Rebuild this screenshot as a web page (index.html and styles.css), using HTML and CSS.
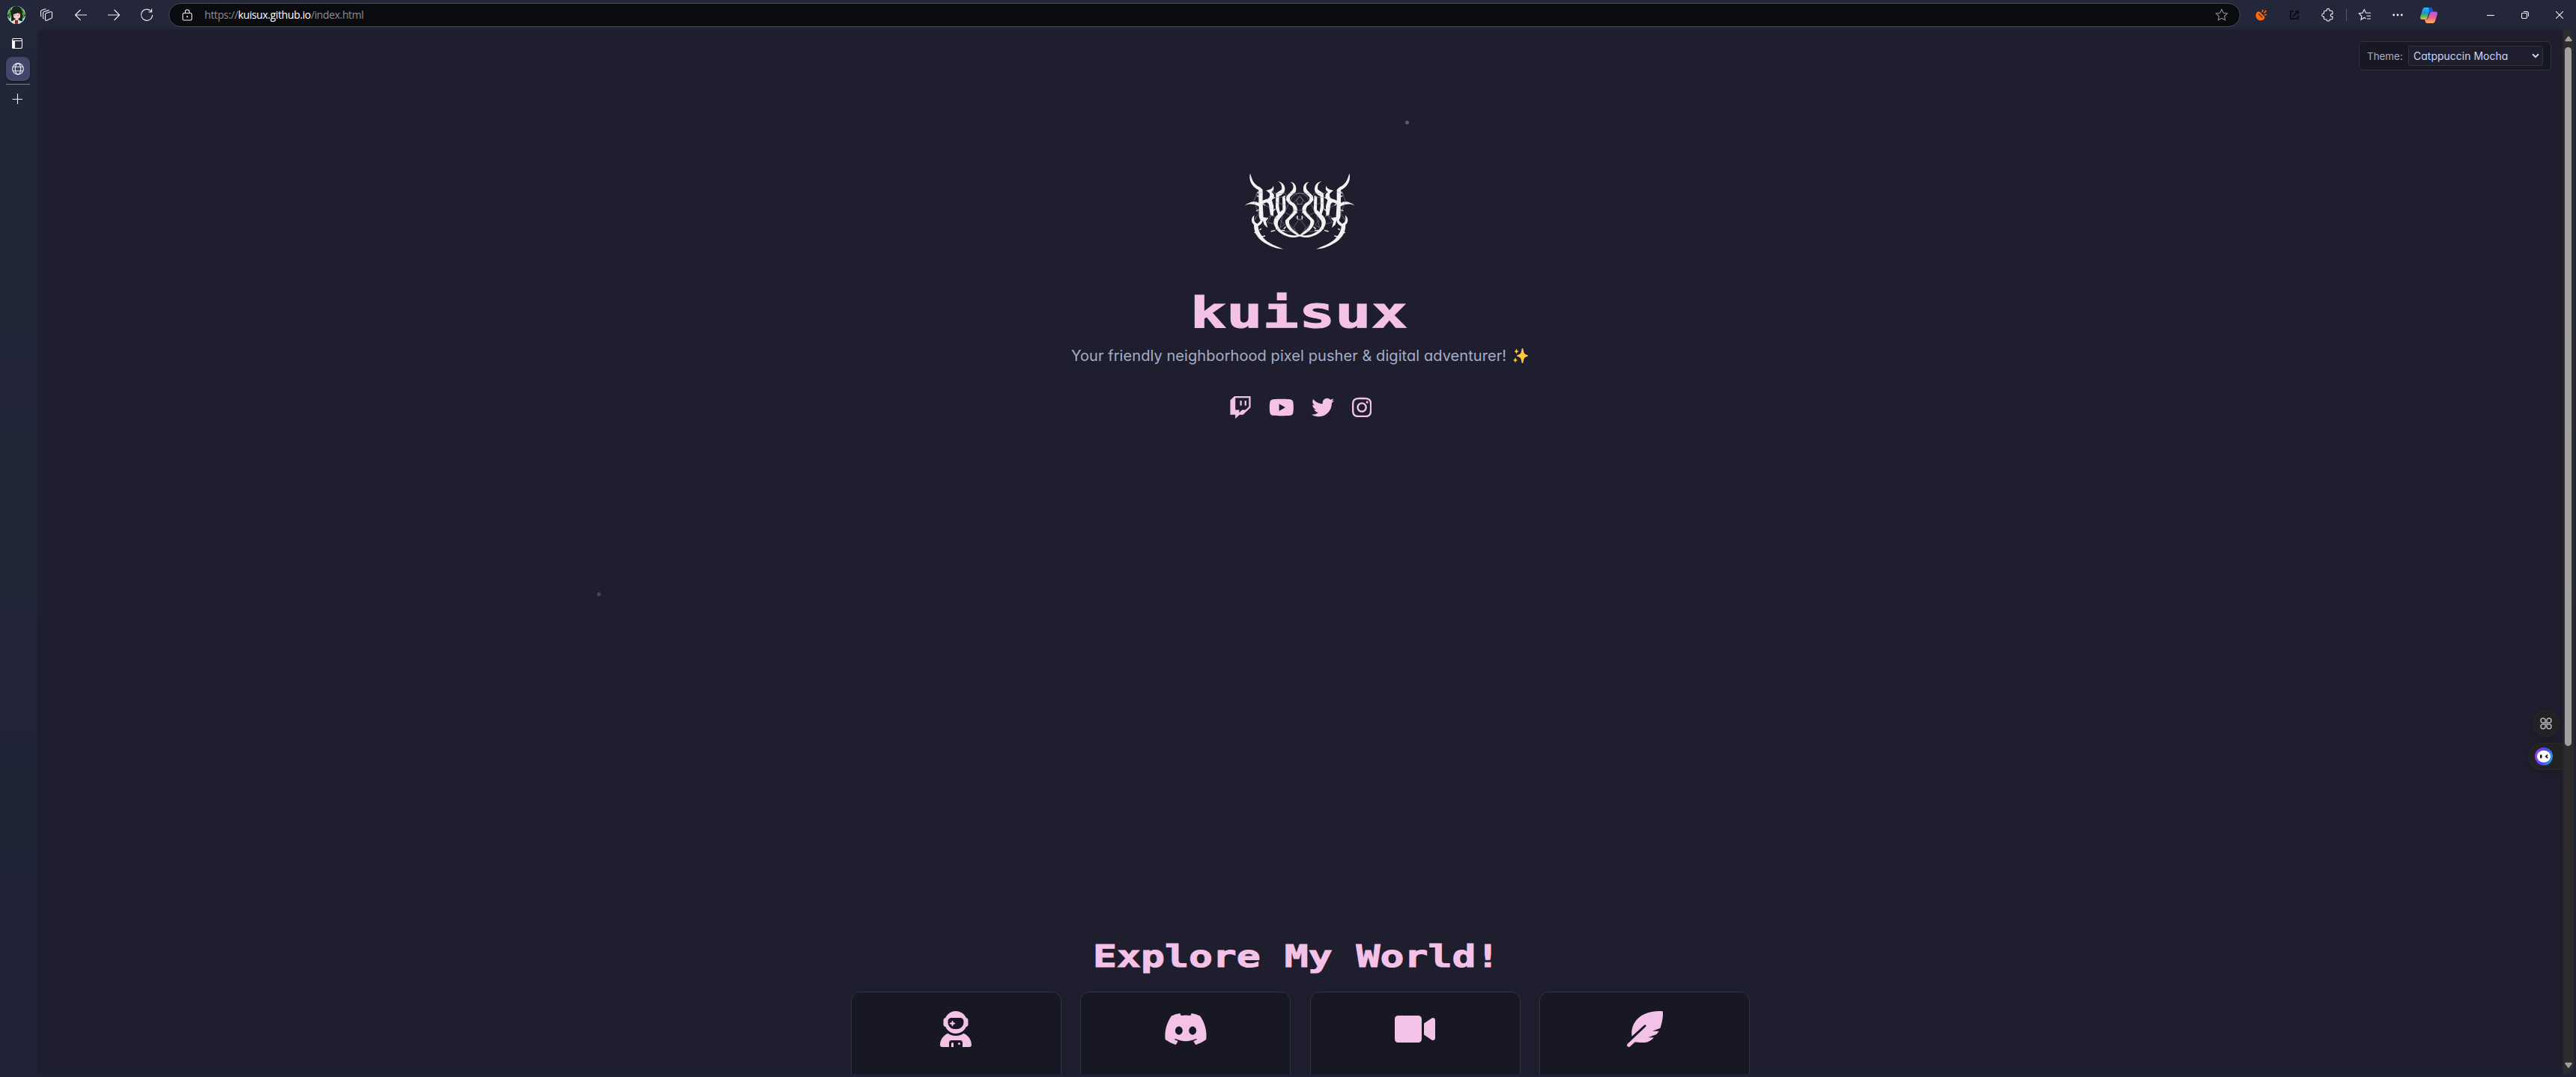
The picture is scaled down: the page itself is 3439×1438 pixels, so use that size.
FILE: index.html
```html
<!DOCTYPE html>
<html lang="en">
<head>
<meta charset="utf-8">
<title>kuisux</title>
<link rel="stylesheet" href="styles.css">
</head>
<body>
<div class="browser">
  <header class="toolbar">
    <div class="nav">
      <svg class="avatar" width="24" height="24" viewBox="0 0 24 24">
        <defs><clipPath id="round"><circle cx="12" cy="12" r="12"/></clipPath></defs>
        <g clip-path="url(#round)">
          <rect width="24" height="24" fill="#a9dcd5"/>
          <path d="M5 20V9C5 2 8 0 12 0s8 3 8 9v11z" fill="#1b2520"/>
          <path d="M4 3 0 13l3 4 3-10zM19 2l5 10-3 5-3-9z" fill="#182016"/>
          <path d="M5 3 1 11M4 8 2 15M19 4l4 8M20 9l2 6" stroke="#5fba30" stroke-width="1.3"/>
          <path d="M8 9h9v6l-4.500 4L8 15z" fill="#f0cfc4"/>
          <path d="M8 11V7l3 2 2-3 4 4-1 1-2-2-2 1z" fill="#1a1c1d"/>
          <path d="M5 24c1-5 4-6 7-6s6 1 7 6z" fill="#dedbd9"/>
          <path d="M10 19h4v5h-4z" fill="#8d2727"/>
          <path d="M9 12.500h1.500m3 0H15" stroke="#b2575a"/>
        </g>
      </svg>
      <svg class="i-spaces" width="18" height="18" viewBox="0 0 18 18"><path d="M9 6.500 14.500 4.800Q16.500 4.300 16.500 6v6q0 1.200-1.200 1.600L9.500 16.200Q7.500 17 7.500 15V8.300Q7.500 7 9 6.500zM5.800 13.800Q4.500 14 4.500 12.500V6.300Q4.500 5 6 4.500L12.500 2.600M2.500 11Q1.500 11 1.500 9.800V4.300Q1.500 3 3 2.500L8.500.8"/></svg>
      <svg class="i-back" width="18" height="18" viewBox="0 0 18 18"><path d="M17 9H1.500M8.500 2 1.500 9l7 7"/></svg>
      <svg class="i-fwd" width="18" height="18" viewBox="0 0 18 18"><path d="M1 9h15.500M9.500 2l7 7-7 7"/></svg>
      <svg class="i-reload" width="18" height="18" viewBox="0 0 18 18"><path d="M16.500 9A7.500 7.500 0 1 1 14 3.300L15.500 5M15.500.8V5h-4.200"/></svg>
    </div>
    <div class="address">
      <svg width="14" height="16" viewBox="0 0 14 16"><rect x="1" y="5.500" width="12" height="9.500" rx="1.800"/><path d="M4.300 5.500V3.700a2.700 2.700 0 0 1 5.400 0v1.800"/><circle class="dot" cx="7" cy="10.300" r="1"/></svg>
      <div class="url">https://<b>kuisux.github.io</b>/index.html</div>
      <svg class="star" width="18" height="18" viewBox="0 0 18 18"><path d="M9 1.500l2.300 4.800 5.200.7-3.800 3.600.9 5.200L9 13.300l-4.600 2.500.9-5.200L1.500 7l5.200-.7z"/></svg>
    </div>
    <div class="tools">
      <svg class="t-orange" width="16" height="16" viewBox="0 0 16 16"><path class="orange" d="M2 4.500C3.500 3 5.500 3.500 7 5l5 5c1 1 .5 3-1 4-3 2-7 1.800-9-1C0 10.500 0 7 2 4.500z"/><path d="M4.500 6.500l5 5" stroke="#232838" stroke-width="1.100"/><path class="ray" d="M9 4.500 10 1M11.500 5.500 14.500 2M12 8l3-.8"/></svg>
      <svg class="t-open" width="14" height="14" viewBox="0 0 14 14"><path d="M6 2H2v10h10V8M8 2h4v4M12 2 5 9"/></svg>
      <svg class="t-ext" width="18" height="18" viewBox="0 0 18 18"><path d="M3.500 5q0-1.500 1.500-1.500h2a2.200 2.200 0 1 1 4.200 0h2.300q1.500 0 1.500 1.500v2.600h-.8a1.900 1.900 0 0 0 0 3.800h.8v2.200q0 1.400-1.500 1.400h-2.200a2.200 2.200 0 0 1-4.400 0H5q-1.500 0-1.500-1.500v-2.200a2.200 2.200 0 1 1 0-4.300z"/></svg>
      <i class="divider"></i>
      <svg class="t-fav" width="18" height="18" viewBox="0 0 18 18"><path d="M10.500 13.800 8.300 12.500 4 15.300 4.800 10.500 1.300 7 6 6.300 8.300 1.800 10.600 6.300H17M11.500 10.200H17M12 14h5"/></svg>
      <svg class="t-more" width="14" height="4" viewBox="0 0 14 4"><circle cx="1.700" cy="2" r="1.400"/><circle cx="7" cy="2" r="1.400"/><circle cx="12.300" cy="2" r="1.400"/></svg>
      <svg class="t-copilot" width="23" height="21" viewBox="0 0 23 21">
        <defs>
          <linearGradient id="ga" x1="0" y1="0" x2="0" y2="1"><stop offset="0" stop-color="#1cb9ff"/><stop offset=".45" stop-color="#1b8fd2"/><stop offset=".7" stop-color="#52b45b"/><stop offset="1" stop-color="#f0c514"/></linearGradient>
          <linearGradient id="gb" x1="0" y1="0" x2="0" y2="1"><stop offset="0" stop-color="#aa5bf0"/><stop offset=".5" stop-color="#ee5b91"/><stop offset="1" stop-color="#ffb352"/></linearGradient>
        </defs>
        <path d="M6 0h7.500q2 0 2.600 2l.9 3.500h-3q-2 0-2.500 2L9.500 14q-.6 2-2.500 2H2.500Q-.5 16 .2 12.500L3 3Q4 0 6 0z" fill="url(#ga)"/>
        <path d="M17 21H9.500q-2 0-2.600-2L6 15.800h2q2 0 2.500-2L13 7q.6-1.500 2.500-1.500h5q3 0 2.300 3.500L20 18q-1 3-3 3z" fill="url(#gb)"/>
        <path d="M11.500 0h2q2 0 2.600 2l1 3.500h-3q-1.400 0-2 1z" fill="#1950d8"/>
      </svg>
      <svg class="w-min" width="10" height="10" viewBox="0 0 10 10"><path d="M0 5.500h10"/></svg>
      <svg class="w-max" width="10" height="10" viewBox="0 0 10 10"><rect x=".5" y="2.500" width="7" height="7" rx="1.500"/><path d="M3 .5h4q2.500 0 2.500 2.500v4"/></svg>
      <svg class="w-close" width="10" height="10" viewBox="0 0 10 10"><path d="M0 0l10 10M10 0 0 10"/></svg>
    </div>
  </header>
  <div class="body">
    <aside class="tabs">
      <svg class="panel" width="14" height="14" viewBox="0 0 14 14"><rect x=".5" y=".5" width="13" height="13" rx="2"/><path class="fill" d="M.5 3.500h3v10H2Q.5 13.500.5 12z"/><path d="M.5 3.500h13"/></svg>
      <div class="tab"><svg width="16" height="16" viewBox="0 0 16 16"><circle cx="8" cy="8" r="7.400"/><ellipse cx="8" cy="8" rx="3.700" ry="7.400"/><path d="M1.300 5.300h13.400M1.300 10.700h13.400"/></svg></div>
      <i class="line"></i>
      <svg class="plus" width="14" height="14" viewBox="0 0 14 14"><path d="M7.500 0v14M.5 7.500h14"/></svg>
    </aside>
    <main class="page">
      <svg class="logo" width="190" height="140" viewBox="0 0 570 420">
        <defs>
          <g id="half">
            <path d="M87 64C80 90 92 118 121 131L121 182C103 173 84 178 64 194 84 184 103 187 122 197L122 238 128 252 138 244 140 236 137 186 152 181C160 182 163 190 163 200L168 232 180 235 181 196 174 172C186 158 186 148 172 139 184 132 183 122 178 113 178 126 169 128 151 133L165 145C168 157 163 167 150 168L137 173 137 130 126 119C106 113 94 94 87 64z"/>
            <path d="M128 234C132 250 128 258 116 266 104 262 99 252 104 232 92 240 88 258 102 270 101 308 124 333 154 348 176 361 196 366 221 368 193 357 160 344 143 326 127 308 119 292 119 276 134 268 141 256 138 238z"/>
            <path d="M197 97C213 103 215 118 213 129L190 145 189 204 198 229C180 246 177 260 187 279 198 302 221 315 253 321 275 323 295 315 309 304 286 313 258 318 234 307 206 294 190 272 201 252L217 232C229 222 231 208 229 190L227 152 216 158 217 211 206 219 202 196 203 156C223 147 231 133 223 113 217 102 208 98 197 97z"/>
            <path d="M249 99C264 110 262 127 252 136L233 155C227 172 238 184 255 195 263 209 261 220 252 228L228 253C225 274 242 292 263 305L291 317 268 297C247 282 240 266 244 253L267 230C283 213 275 191 257 181 245 173 243 164 249 157L269 139C275 120 268 101 249 99z"/>
            <path d="M138 239 160 244 150 256 157 283 143 270 137 250z"/>
            <path class="spikes" d="M123 140l-9 3M122 158l-8-4M122 210l-11 5M137 185l9 8M124 291l8-5M133 318l14-3M151 343l14 2M186 160l-8 5M230 172l8-4M187 207l-8 8M199 280l-9 8M187 293l-17 4M230 278l-9 9M226 294l-14-2M266 215l10 8M276 234v15M112 305l-8-5"/>
            <path class="web" d="M118 135l-16 40 20 52M177 136l14 12 35-5 13 18M240 145h45M239 190l19-35 27-14M263 180l22-22M273 188h12M285 154l-13 17 5 16h8M239 190l-13 30 20 12 17-20h22M149 245l24-12 23 12M172 235l-17 25 30 8M205 250l20 20-30 19M217 233l-10 48M267 238l18 13M285 246l-25 35M245 268l40 44M225 297h28l15-13M110 150l26-12M140 189l31 15M189 180l40 12M188 160l40 0M122 225l-20 25M112 240l-8 14"/>
          </g>
        </defs>
        <use href="#half"/><use href="#half" transform="translate(571 0) scale(-1 1)"/>
      </svg>
      <h1>kuisux</h1>
      <p class="tagline"><span>Your friendly neighborhood pixel pusher &amp; digital adventurer!</span>
        <svg width="20" height="20" viewBox="0 0 20 20"><path d="M12.500 0q.8 0 1 1.200C14.300 6.500 15 7.800 18.800 9q1.200.4 1.200 1t-1.200 1c-3.800 1.200-4.500 2.500-5.300 7.800q-.2 1.200-1 1.200t-1-1.200C10.700 13.500 10 12.200 6.200 11 5 10.600 5 10.300 5 10s0-.6 1.200-1C10 7.800 10.700 6.500 11.500 1.200q.2-1.200 1-1.200zM4.500.500 5.500 3l2.200 1.200-2.200 1-1 2.500-1-2.500-2-1 2-1.200zM3 12l.9 2.800L6 16l-2.100 1L3 19.500 2.100 17 0 16l2.100-1.200z"/></svg>
      </p>
      <nav class="social">
        <svg width="30" height="30" viewBox="0 0 512 512"><path d="M391.170 103.470H352.540v109.700h38.630ZM285 103H246.370V212.750H285ZM120.830 0 24.310 91.420V420.580H140.140V512l96.530-91.420h77.250L487.690 256V0ZM449.070 237.750l-77.220 73.120H294.610l-67.600 64v-64H140.140V36.580H449.070Z"/></svg>
        <svg width="33.750" height="30" viewBox="0 0 576 512"><path d="M549.655 124.083c-6.281-23.650-24.787-42.276-48.284-48.597C458.781 64 288 64 288 64S117.220 64 74.629 75.486c-23.497 6.322-42.003 24.947-48.284 48.597-11.412 42.867-11.412 132.305-11.412 132.305s0 89.438 11.412 132.305c6.281 23.650 24.787 41.500 48.284 47.821C117.220 448 288 448 288 448s170.780 0 213.371-11.486c23.497-6.321 42.003-24.171 48.284-47.821 11.412-42.867 11.412-132.305 11.412-132.305s0-89.438-11.412-132.305zM232.145 337.591V175.185l142.739 81.205-142.739 81.201z"/></svg>
        <svg width="30" height="30" viewBox="0 0 512 512"><path d="M459.370 151.716c.325 4.548.325 9.097.325 13.645 0 138.720-105.583 298.558-298.558 298.558-59.452 0-114.680-17.219-161.137-47.106 8.447.974 16.568 1.299 25.340 1.299 49.055 0 94.213-16.568 130.274-44.832-46.132-.975-84.792-31.188-98.112-72.772 6.498.974 12.995 1.624 19.818 1.624 9.421 0 18.843-1.300 27.614-3.573-48.081-9.747-84.143-51.980-84.143-102.985v-1.299c13.969 7.797 30.214 12.670 47.431 13.319-28.264-18.843-46.781-51.005-46.781-87.391 0-19.492 5.197-37.360 14.294-52.954 51.655 63.675 129.300 105.258 216.365 109.807-1.624-7.797-2.599-15.918-2.599-24.040 0-57.828 46.782-104.934 104.934-104.934 30.213 0 57.502 12.670 76.670 33.137 23.715-4.548 46.456-13.320 66.599-25.340-7.798 24.366-24.366 44.833-46.132 57.827 21.117-2.273 41.584-8.122 60.426-16.243-14.292 20.791-32.161 39.308-52.628 54.253z"/></svg>
        <svg width="26.250" height="30" viewBox="0 0 448 512"><path d="M224.100 141c-63.600 0-114.900 51.300-114.900 114.900s51.300 114.900 114.900 114.900S339 319.500 339 255.900 287.700 141 224.100 141zm0 189.600c-41.100 0-74.700-33.500-74.700-74.700s33.500-74.700 74.700-74.700 74.700 33.500 74.700 74.700-33.600 74.700-74.700 74.700zm146.400-194.300c0 14.900-12 26.800-26.800 26.800-14.900 0-26.800-12-26.800-26.800s12-26.800 26.800-26.800 26.800 12 26.800 26.800zm76.100 27.200c-1.700-35.900-9.900-67.700-36.200-93.900-26.200-26.200-58-34.400-93.900-36.200-37-2.100-147.900-2.100-184.900 0-35.800 1.700-67.600 9.900-93.900 36.100s-34.400 58-36.200 93.900c-2.100 37-2.100 147.900 0 184.900 1.700 35.900 9.900 67.700 36.200 93.900s58 34.400 93.900 36.200c37 2.100 147.900 2.100 184.900 0 35.900-1.700 67.700-9.900 93.900-36.200 26.200-26.200 34.400-58 36.200-93.900 2.100-37 2.100-147.800 0-184.800zM398.800 388c-7.800 19.600-22.900 34.700-42.600 42.600-29.500 11.700-99.500 9-132.100 9s-102.700 2.600-132.100-9c-19.600-7.800-34.700-22.900-42.600-42.600-11.700-29.500-9-99.500-9-132.100s-2.600-102.700 9-132.100c7.800-19.600 22.900-34.700 42.600-42.600 29.500-11.700 99.500-9 132.100-9s102.700-2.600 132.100 9c19.600 7.800 34.700 22.900 42.600 42.600 11.700 29.500 9 99.500 9 132.100s2.700 102.700-9 132.100z"/></svg>
      </nav>
      <h2>Explore My World!</h2>
      <section class="cards">
        <article><svg width="42" height="48" viewBox="0 0 448 512"><path d="M370.700 96.100C346.100 39.500 289.700 0 224 0S101.900 39.500 77.300 96.100C60.900 97.500 48 111.200 48 128v64c0 16.800 12.900 30.500 29.300 31.900C101.900 280.500 158.300 320 224 320s122.100-39.500 146.700-96.100c16.400-1.400 29.300-15.100 29.300-31.900V128c0-16.800-12.900-30.500-29.300-31.900zM336 144v16c0 53-43 96-96 96H208c-53 0-96-43-96-96V144c0-26.500 21.500-48 48-48H288c26.500 0 48 21.500 48 48zM189.300 162.700l-6-21.200c-.9-3.300-3.900-5.500-7.300-5.500s-6.400 2.200-7.300 5.500l-6 21.200-21.200 6c-3.300.9-5.500 3.900-5.500 7.300s2.200 6.400 5.500 7.300l21.200 6 6 21.200c.9 3.300 3.900 5.500 7.300 5.500s6.400-2.200 7.300-5.500l6-21.200 21.200-6c3.300-.9 5.500-3.900 5.500-7.300s-2.200-6.400-5.500-7.300l-21.200-6zM112.700 316.500C46.700 342.600 0 407 0 482.300 0 498.700 13.300 512 29.700 512H128V448c0-17.700 14.300-32 32-32H288c17.700 0 32 14.300 32 32v64h98.300c16.400 0 29.700-13.300 29.700-29.700 0-75.300-46.700-139.700-112.700-165.800C303.900 338.800 265.500 352 224 352s-79.900-13.200-111.300-35.500zM176 448c-8.800 0-16 7.200-16 16v48h32V464c0-8.800-7.200-16-16-16zm96 32a16 16 0 1 0 0-32 16 16 0 1 0 0 32z"/></svg></article>
        <article><svg width="60" height="48" viewBox="0 0 640 512"><path d="M524.531 69.836a1.500 1.500 0 0 0-.764-.7A485.065 485.065 0 0 0 404.081 32.030a1.816 1.816 0 0 0-1.923.91 337.461 337.461 0 0 0-14.900 30.600 447.848 447.848 0 0 0-134.426 0 309.541 309.541 0 0 0-15.135-30.600 1.890 1.890 0 0 0-1.924-.91A483.689 483.689 0 0 0 116.085 69.137a1.712 1.712 0 0 0-.788.676C39.068 183.651 18.186 294.690 28.430 404.354a2.016 2.016 0 0 0 .765 1.375A487.666 487.666 0 0 0 176.020 479.918a1.900 1.900 0 0 0 2.063-.676A348.200 348.200 0 0 0 208.120 430.400a1.860 1.860 0 0 0-1.019-2.588 321.173 321.173 0 0 1-45.868-21.853 1.885 1.885 0 0 1-.185-3.126c3.082-2.309 6.166-4.711 9.109-7.137a1.819 1.819 0 0 1 1.900-.256c96.229 43.917 200.410 43.917 295.500 0a1.812 1.812 0 0 1 1.924.233c2.944 2.426 6.027 4.851 9.132 7.160a1.884 1.884 0 0 1-.162 3.126 301.407 301.407 0 0 1-45.890 21.830 1.875 1.875 0 0 0-1 2.611 391.055 391.055 0 0 0 30.014 48.815 1.864 1.864 0 0 0 2.063.7A486.048 486.048 0 0 0 610.700 405.729a1.882 1.882 0 0 0 .765-1.352C623.729 277.594 590.933 167.465 524.531 69.836ZM222.491 337.580c-28.972 0-52.844-26.587-52.844-59.239S193.056 219.100 222.491 219.100c29.665 0 53.306 26.820 52.843 59.239C275.334 310.993 251.924 337.580 222.491 337.580Zm195.380 0c-28.971 0-52.843-26.587-52.843-59.239S388.437 219.100 417.871 219.100c29.667 0 53.307 26.820 52.844 59.239C470.715 310.993 447.538 337.580 417.871 337.580Z"/></svg></article>
        <article><svg width="54" height="48" viewBox="0 0 576 512"><path d="M336.200 64H47.800C21.400 64 0 85.400 0 111.800v288.400C0 426.600 21.400 448 47.800 448h288.400c26.400 0 47.800-21.400 47.800-47.800V111.800c0-26.400-21.400-47.800-47.800-47.800zm189.400 37.700L416 177.300v157.400l109.600 75.500c21.200 14.600 50.400-.3 50.400-25.800V127.500c0-25.400-29.100-40.400-50.400-25.800z"/></svg></article>
        <article><svg width="48" height="48" viewBox="0 0 512 512"><path d="M484 0C512 0 516 10 515 34 509 112 496 186 474 242L362 285H457Q442 306 420 330L302 377H382C346 419 302 448 250 448 190 450 145 444 112 442L45 504C36 514 21 514 10 505-3 496-2 480 6 470L268 222C282 208 263 184 246 201L70 360C60 290 72 232 102 176 168 50 320-2 484 0z"/></svg></article>
      </section>
      <i class="mote pink"></i><i class="mote grey"></i>
      <div class="theme"><label>Theme:</label><div class="select"><span>Catppuccin Mocha</span><svg width="10" height="7" viewBox="0 0 10 7"><path d="M1 1.200l4 4 4-4"/></svg></div></div>
      <div class="apps"><svg width="16" height="16" viewBox="0 0 16 16"><path d="M7 7H4a3 3 0 1 1 3-3zM9 7V4a3 3 0 1 1 3 3zM7 9v3a3 3 0 1 1-3-3zM9 9h3a3 3 0 1 1-3 3z"/></svg></div>
      <div class="bot"><div class="ring"><svg width="18" height="16" viewBox="0 0 18 16"><ellipse cx="9" cy="8" rx="9" ry="8" fill="#fff"/><rect x="4" y="5.500" width="2.500" height="5" rx="1" fill="#111"/><path d="M14 5.800 11.800 8.200 14.300 10" fill="none" stroke="#111" stroke-width="1.700"/></svg></div></div>
    </main>
    <div class="scrollbar">
      <svg width="10" height="8" viewBox="0 0 10 8"><path d="M4 .8q1-1.300 2 0l3.600 5Q10 7.300 8.500 7.300h-7Q0 7.300.4 5.800z"/></svg>
      <i class="thumb"></i>
      <svg class="down" width="10" height="8" viewBox="0 0 10 8"><path d="M4 7.200q1 1.300 2 0l3.600-5Q10 .7 8.500.7h-7Q0 .7.400 2.200z"/></svg>
    </div>
  </div>
</div>
</body>
</html>
```
FILE: styles.css
```css
* { box-sizing: border-box; }
body { margin: 0; background: #232838; overflow: hidden; }
.browser { width: 3439px; height: 1438px; display: flex; flex-direction: column; background: linear-gradient(#24273a, #222738 60px, #1f2335); }
svg { display: block; flex: none; }

.toolbar { height: 40px; display: flex; align-items: center; flex: none; }
.toolbar svg, .tabs svg { fill: none; stroke: #f0f0f2; stroke-width: 1.1; }
.nav { width: 225px; flex: none; display: flex; align-items: center; padding-left: 10px; }
.nav .avatar { stroke: none; }
.i-spaces { margin-left: 19px; }
.i-back { margin-left: 28px; }
.i-fwd { margin-left: 26px; }
.i-reload { margin-left: 26px; }

.address { width: 2766px; height: 32px; flex: none; display: flex; align-items: center; padding: 0 15px 0 17px; border: 1px solid #4b4c50; border-radius: 16px; background: #0b0c10; }
.url { flex: 1; margin-left: 16px; font: 14px/20px "Open Sans", sans-serif; letter-spacing: -0.38px; color: #8c8d8f; white-space: nowrap; }
.url b { font-weight: 400; color: #fff; }
.address .dot { fill: #fff; stroke: none; }
.address .star { stroke: #8f9093; }

.tools { display: flex; align-items: center; }
.tools .t-orange { margin-left: 20px; stroke: none; }
.t-orange .orange { fill: #ff6a0c; }
.tools .t-orange .ray { stroke: #ff6a0c; stroke-width: 1.6; }
.tools .t-open { margin-left: 29px; stroke: #0d0e12; stroke-width: 2; }
.t-ext { margin-left: 29px; }
.divider { width: 1px; height: 16px; margin-left: 15px; background: #55586a; }
.t-fav { margin-left: 15px; }
.tools .t-more { margin-left: 28px; fill: #f0f0f2; stroke: none; }
.tools .t-copilot { margin-left: 23px; stroke: none; }
.w-min { margin-left: 66px; }
.w-max { margin-left: 36px; }
.w-close { margin-left: 36px; }

.body { height: 1394px; display: flex; }
.tabs { width: 51px; flex: none; display: flex; flex-direction: column; padding: 11px 0 0 8px; }
.tabs .panel { margin-left: 8px; }
.tabs .panel .fill { fill: #fff; }
.tab { width: 32px; height: 32px; margin-top: 11px; display: flex; align-items: center; justify-content: center; border-radius: 8px; background: #43476a; box-shadow: 0 1px 3px #11131c; }
.line { width: 32px; height: 1px; margin-top: 4px; background: #777a86; }
.plus { margin: 12px 0 0 8px; }

.page { position: relative; width: 3370px; display: flex; flex-direction: column; align-items: center; padding-top: 170px; overflow: hidden; background: #1e1e2e; border-radius: 8px 0 0 8px; box-shadow: 0 0 3px #191b29; }
.page > * { flex: none; }
.logo { margin-right: 3px; fill: #f2f2f2; }
.logo .spikes { fill: none; stroke: #f2f2f2; stroke-width: 4; }
.logo .web { fill: none; stroke: #9d9da5; stroke-width: 1.6; }
h1, h2 { margin: 0; font-family: "DejaVu Sans Mono", monospace; font-weight: 700; color: #f5c2e7; white-space: nowrap; }
h1 { margin: 37px 4px 0 0; font-size: 57px; line-height: 60px; transform: scaleX(1.41); -webkit-text-stroke: 1px #f5c2e7; }
h2 { margin: 693px 10px 0 0; font-size: 40px; line-height: 50px; transform: scaleX(1.327); -webkit-text-stroke: 1px #f5c2e7; }
.tagline { margin: 13px 2px 0 0; display: flex; align-items: center; gap: 9px; font: 20px/30px "Inter", sans-serif; font-feature-settings: "cv11"; letter-spacing: 0.07px; color: #a6adc8; white-space: nowrap; }
.tagline svg { fill: #ffc83d; }
.social { margin-top: 39px; height: 30px; display: flex; gap: 23.2px; fill: #f5c2e7; }

.cards { width: 1200px; margin-top: 22px; display: grid; grid-template-columns: repeat(4, 1fr); gap: 25.6px; }
.cards article { height: 260px; padding-top: 25px; display: flex; justify-content: center; background: #181825; border: 1px solid #313244; border-radius: 12px; fill: #f5c2e7; }

.mote { position: absolute; width: 5px; height: 5px; border-radius: 50%; }
.mote.pink { left: 1825px; top: 121px; background: #66566d; }
.mote.grey { left: 746px; top: 751px; background: #484858; }

.theme { position: absolute; left: 3098px; top: 15px; width: 257px; height: 39px; display: flex; align-items: center; padding: 0 10px; border: 1px solid #313244; border-radius: 6px; background: #181825; font: 13.4px/20px "Inter", sans-serif; font-feature-settings: "cv11"; color: #a6adc8; }
.theme label { width: 55px; }
.select { width: 180px; height: 27px; display: flex; align-items: center; justify-content: space-between; padding: 0 4px 0 6px; border: 1px solid #313244; border-radius: 3px; background: #1e1e2e; font-size: 14px; color: #cdd6f4; white-space: nowrap; }
.select svg { fill: none; stroke: #cdd6f4; stroke-width: 2; }

.apps { position: absolute; left: 3330px; top: 908px; width: 36px; height: 36px; display: flex; align-items: center; justify-content: center; border-radius: 50%; background: #222224; border: 1px solid #2a2a2c; box-shadow: 0 2px 10px rgba(0, 0, 0, 0.2); }
.apps svg { fill: none; stroke: #b4b4b8; stroke-width: 1.5; }
.bot { position: absolute; left: 3324px; top: 952px; width: 46px; height: 36px; display: flex; align-items: center; padding-left: 8px; border-radius: 18px 0 0 18px; background: #222224; border: 1px solid #2a2a2c; border-right: 0; box-shadow: 0 2px 10px rgba(0, 0, 0, 0.2); }
.ring { width: 24px; height: 24px; display: flex; align-items: center; justify-content: center; border-radius: 50%; background: linear-gradient(110deg, #b23be8, #4b45f5 50%, #18b8e0); }

.scrollbar { width: 15px; display: flex; flex-direction: column; align-items: center; padding: 8px 0; background: #2c2c2c; border-radius: 0 10px 10px 0; fill: #9f9f9f; }
.thumb { width: 9px; height: 933px; margin-top: 7px; border-radius: 5px; background: #9f9f9f; }
.down { margin-top: auto; }
```
